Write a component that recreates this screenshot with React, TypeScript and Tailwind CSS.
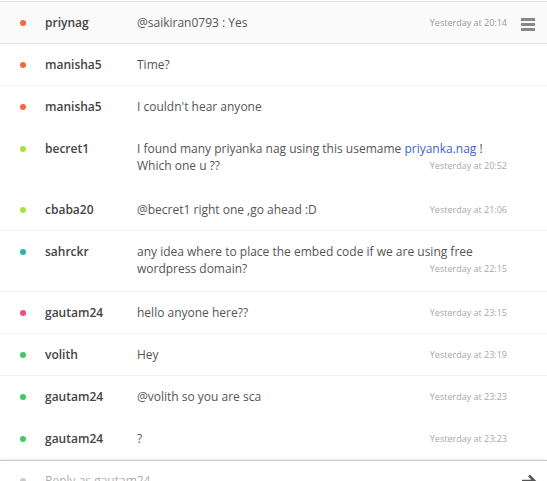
import React from "react";

type Msg = {
  name: string;
  color: string;
  text: React.ReactNode;
  time: string;
  border: boolean;
  tall?: boolean;
};

const msgs: Msg[] = [
  { name: "manisha5", color: "bg-[#f26a3a]", text: "Time?", time: "", border: true },
  { name: "manisha5", color: "bg-[#f26a3a]", text: "I couldn't hear anyone", time: "", border: false },
  {
    name: "becret1",
    color: "bg-[#a9e23a]",
    text: (
      <>
        I found many priyanka nag using this usemame <span className="text-[#3f62d0]">priyanka.nag</span> ! Which one u ??
      </>
    ),
    time: "Yesterday at 20:52",
    border: false,
    tall: true,
  },
  { name: "cbaba20", color: "bg-[#a9e23a]", text: "@becret1 right one ,go ahead :D", time: "Yesterday at 21:06", border: true },
  {
    name: "sahrckr",
    color: "bg-[#27b4a6]",
    text: "any idea where to place the embed code if we are using free wordpress domain?",
    time: "Yesterday at 22:15",
    border: true,
    tall: true,
  },
  { name: "gautam24", color: "bg-[#ee4a84]", text: "hello anyone here??", time: "Yesterday at 23:15", border: true },
  { name: "volith", color: "bg-[#3fcc68]", text: "Hey", time: "Yesterday at 23:19", border: true },
  { name: "gautam24", color: "bg-[#3fcc68]", text: "@volith so you are sca", time: "Yesterday at 23:23", border: false },
  { name: "gautam24", color: "bg-[#3fcc68]", text: "?", time: "Yesterday at 23:23", border: false },
];

function Row({ m }: { m: Msg }) {
  return (
    <div
      className={`flex items-start pt-3 ${m.tall ? "pb-[14px]" : "pb-3"} ${
        m.border ? "border-b border-[#f2f2f2]" : "border-b border-transparent"
      }`}
    >
      <div className="w-[45px] shrink-0 h-[17px] flex items-center pl-[20px]">
        <span className={`block w-[6px] h-[6px] rounded-full ${m.color}`} />
      </div>
      <div className="w-[92px] shrink-0 leading-[17px] text-[12px] font-semibold text-[#444]">{m.name}</div>
      <div className="flex-1 pr-[40px] leading-[17px] text-[12px] text-[#555]">
        {m.text}
        {m.time && <span className="float-right text-[9px] text-[#a8a8a8] leading-[17px]">{m.time}</span>}
      </div>
    </div>
  );
}

export default function App() {
  return (
    <div
      className="w-[547px] h-[481px] overflow-hidden bg-white flex flex-col"
      style={{ fontFamily: '"Open Sans", "Liberation Sans", sans-serif' }}
    >
      <div className="mt-[1px] flex items-start py-3 bg-[#fafafa] border-y border-[#e4e4e4] h-[43px] shrink-0">
        <div className="w-[45px] shrink-0 h-[17px] flex items-center pl-[20px]">
          <span className="block w-[6px] h-[6px] rounded-full bg-[#f26a3a]" />
        </div>
        <div className="w-[92px] shrink-0 leading-[17px] text-[12px] font-semibold text-[#444]">priynag</div>
        <div className="flex-1 leading-[17px] text-[12px] text-[#555]">@saikiran0793 : Yes</div>
        <span className="text-[9px] text-[#999] leading-[17px]">Yesterday at 20:14</span>
        <div className="w-[40px] shrink-0 flex justify-end pr-[12px] pt-[4px]">
          <div className="flex flex-col gap-[2px]">
            <span className="block w-[14px] h-[3px] bg-[#888]" />
            <span className="block w-[14px] h-[3px] bg-[#888]" />
            <span className="block w-[14px] h-[3px] bg-[#888]" />
          </div>
        </div>
      </div>
      {msgs.map((m, i) => (
        <Row key={i} m={m} />
      ))}
      <div className="border-t border-[#c8c8c8] shadow-[0_-1px_2px_rgba(0,0,0,0.08)] flex items-center h-[40px] shrink-0">
        <div className="w-[45px] shrink-0 flex items-center pl-[20px]">
          <span className="block w-[6px] h-[6px] rounded-full bg-[#ccc]" />
        </div>
        <div className="flex-1 text-[12px] text-[#b0b0b0]">Reply as gautam24</div>
        <div className="w-[40px] flex justify-end pr-[10px]">
          <svg width="16" height="14" viewBox="0 0 16 14" fill="none">
            <path d="M1 7h12M8 1.5 13.5 7 8 12.5" stroke="#555" strokeWidth="2.5" />
          </svg>
        </div>
      </div>
    </div>
  );
}
